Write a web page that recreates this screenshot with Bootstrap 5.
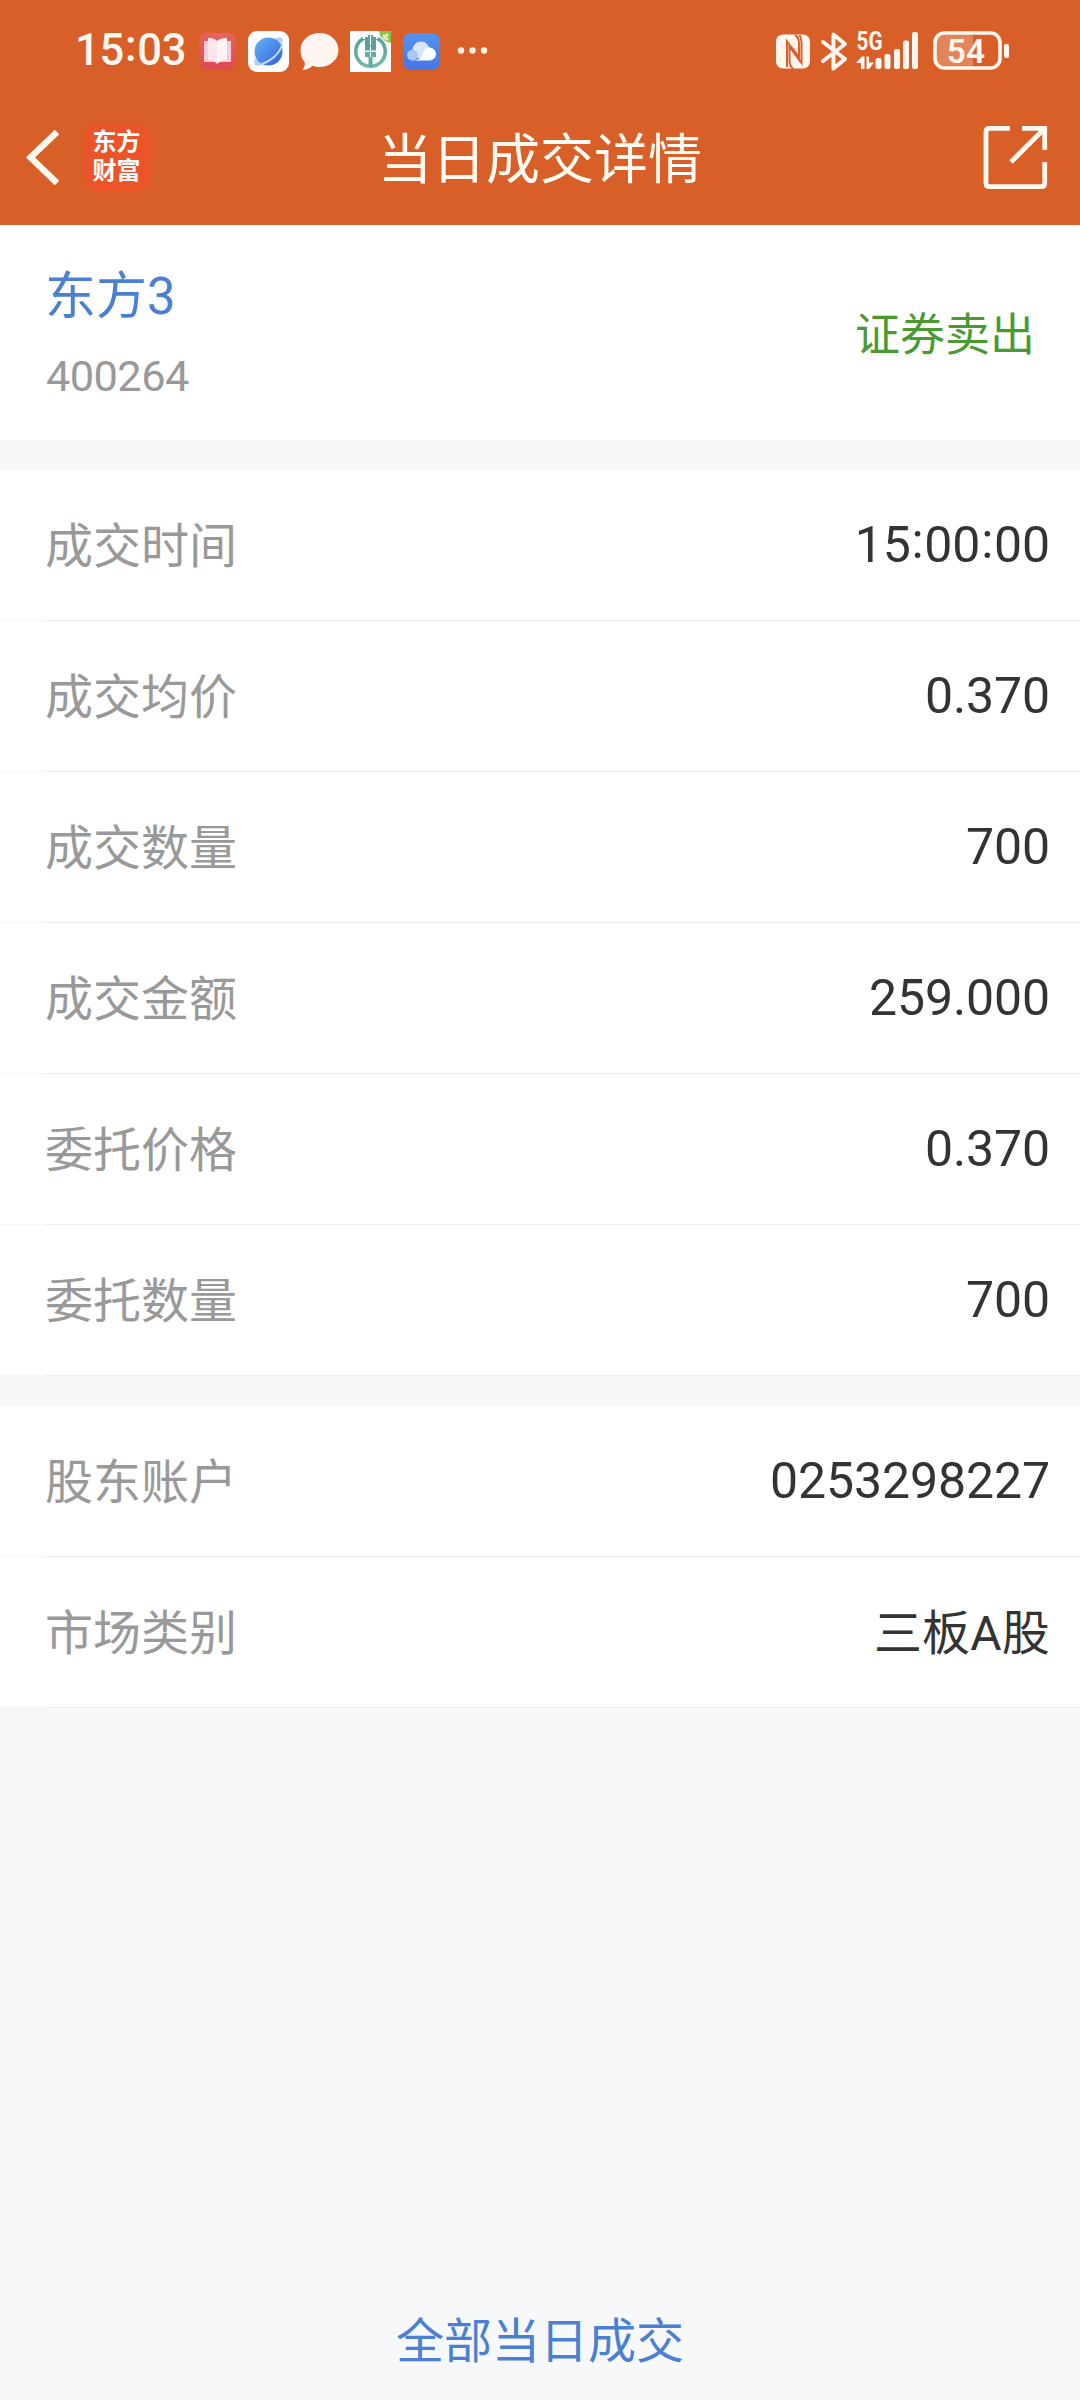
<!DOCTYPE html>
<html lang="zh-CN">
<head>
<meta charset="utf-8">
<meta name="viewport" content="width=device-width, initial-scale=1">
<title>当日成交详情</title>
<link rel="stylesheet" href="https://cdn.jsdelivr.net/npm/bootstrap@5.3.0/dist/css/bootstrap.min.css">
<style>
  body { font-family: Roboto, "Noto Sans CJK SC", sans-serif; background: #f7f8fa; color: #333; line-height: 1; }
  .screen { height: 2400px; width: 1080px; }
  .topbar { background: #d85f28; color: #fff6f0; height: 225px; }
  .status { height: 102px; padding-left: 75px; padding-right: 70px; }
  .clock { font-size: 43.5px; font-weight: 500; width: 110px; margin-right: 13px; letter-spacing: -.1px; }
  .colon { position: relative; top: -4px; padding: 0 .8px; }
  .titlebar { height: 113px; }
  .page-title { font-size: 54px; color: #fffaf2; line-height: 113px; padding-top: 4px; }
  .brand-tile { width: 67px; height: 67px; border-radius: 14px; background: #ea5428; color: #fff; font-size: 24px; line-height: 29px; font-weight: 700; margin: 0 0 3px 25px; padding-right: 2px; }
  .summary { height: 215px; padding: 0 45px 0 45px; }
  .stock { font-size: 51px; line-height: 60px; color: #4b7fd1; margin-top: 42px; }
  .code { font-size: 43.4px; line-height: 50px; color: #999; margin-top: 25px; padding-left: 1px; letter-spacing: -.6px; }
  .side { font-size: 45px; color: #4a9a32; padding-top: 5px; }
  .gap-bar { height: 30px; }
  .item { height: 151px; padding: 0 30px 1px 45px; background: linear-gradient(90deg, #f7f8fa 45px, #e9ebed 45px) bottom / 100% 1px no-repeat #fff; }
  .item-label { font-size: 48px; color: #999; padding-top: 3px; }
  .item-value { font-size: 50px; color: #333; letter-spacing: -.1px; }
  .item-value-cjk { font-size: 48px; letter-spacing: .2px; padding-top: 3px; }
  .all-link { font-size: 48px; color: #4b7fd1; line-height: 60px; padding-bottom: 28px; }
  svg { display: block; flex: none; }
</style>
</head>
<body>
<div class="screen d-flex flex-column">
  <header class="topbar">
    <div class="status d-flex align-items-center">
      <span class="clock text-nowrap">15<span class="colon">:</span>03</span>
      <!-- notification icons -->
      <svg width="292" height="46" viewBox="198 28 292 46">
        <defs>
          <linearGradient id="book" x2="0" y2="1"><stop stop-color="#e56461"/><stop offset="1" stop-color="#dc4a50"/></linearGradient>
          <linearGradient id="globe" x2="1" y2="1"><stop stop-color="#63b7f4"/><stop offset="1" stop-color="#335ee0"/></linearGradient>
          <linearGradient id="sky" x2="0" y2="1"><stop stop-color="#5394f0"/><stop offset="1" stop-color="#4775e8"/></linearGradient>
          <linearGradient id="teal" x2="0" y2="1"><stop stop-color="#559d9f"/><stop offset="1" stop-color="#75b9a6"/></linearGradient>
        </defs>
        <rect x="199" y="33" width="37" height="37" rx="8" fill="url(#book)"/>
        <path d="M204 41h4v-3q6 0 9 3q4-3 10-3v3h4v21h-11l-3 2-2-2h-11z" fill="#f5cbd4"/>
        <path d="M208 38q6 0 9 3v22q-4-3-9-3z" fill="#fbe5ec"/><path d="M217 41q4-3 10-3v22q-6 0-10 3z" fill="#fff3f6"/>
        <rect x="248" y="31" width="41" height="41" rx="9" fill="#fff"/>
        <ellipse cx="268.500" cy="51.500" rx="19" ry="6.500" transform="rotate(-45 268.500 51.500)" fill="#b5cff8"/>
        <circle cx="268.500" cy="51.500" r="14" fill="url(#globe)"/>
        <path d="M282.500 44q-2 7-8 12.500t-13 7.500" fill="none" stroke="#c6dbfb" stroke-width="2"/>
        <path d="M319.500 33c10.500 0 19 7.500 19 17s-8.500 17-19 17c-3 0-5-.4-7-1.200-2.500 2.500-6 4-10 4 2-2 2.600-5 2.200-7.500-2.800-3-4.200-8-4.200-12.300 0-9.500 8.500-17 19-17z" fill="#fff6f2"/>
        <rect x="350" y="31" width="41" height="41" fill="#fff"/>
        <circle cx="370.500" cy="51.500" r="14.800" fill="none" stroke="url(#teal)" stroke-width="3.600"/>
        <path d="M363 32h15v7h-15z" fill="#fff"/>
        <path d="M365 37h3v-2h5v2h3v13.500h-11z" fill="#5c9fa3"/>
        <path d="M370.500 35v10" stroke="#fff" stroke-width="1.200"/>
        <path d="M365 52h11v5h-3.500v10h-4V57H365z" fill="#62aba4"/>
        <path d="M370.500 46v11" stroke="#fff" stroke-width="1"/>
        <path d="M379 31h12v12q-11-2-12-12z" fill="#8dc24a"/><path d="M383 39l5-5M383 35l5 5" stroke="#dff0be" stroke-width="2.500"/>
        <rect x="403" y="33" width="37" height="37" rx="8" fill="url(#sky)"/>
        <circle cx="421" cy="50" r="8.500" fill="#d6e6fd"/><circle cx="412.500" cy="55" r="5.500" fill="#a9c8fa"/>
        <path d="M412 60.500q8 0 11-6a6.500 6.500 0 1 1 6 6z" fill="#fff"/>
        <g fill="#fff0e6"><circle cx="461" cy="50.500" r="3.200"/><circle cx="472.500" cy="50.500" r="3.200"/><circle cx="484" cy="50.500" r="3.200"/></g>
      </svg>
      <!-- system icons -->
      <svg class="ms-auto" width="236" height="46" viewBox="774 28 236 46" fill="#fff6ef">
        <rect x="776" y="34.500" width="34" height="34" rx="7"/>
        <path d="M787 67V41.500L799 57V44Q799 37 795 35M799.500 35Q801.500 38 801.500 43V63L789.500 47V60Q789.500 66 793 68.500" fill="none" stroke="#d85f28" stroke-width="2"/>
        <path d="M823 42l22 17-11.500 9.500V34.500L845 44l-22 17" fill="none" stroke="#fff6ef" stroke-width="4" stroke-linejoin="round" stroke-linecap="round"/>
        <text x="856.500" y="50" font-size="25" font-weight="700" textLength="26" lengthAdjust="spacingAndGlyphs">5G</text>
        <path d="M856 63l6-6.500h2.500V69h-3.500v-6zM866.500 56.500h2.500v6h5l-5 6.500h-2.500z"/>
        <rect x="875.500" y="58" width="6" height="11" rx="2"/><rect x="884.500" y="54" width="6" height="15" rx="2"/><rect x="894" y="49" width="6" height="20" rx="2"/><rect x="903" y="40.500" width="6" height="28.500" rx="2"/><rect x="912" y="32" width="6" height="37" rx="2"/>
        <path d="M944 33h29v35h-29a9 9 0 0 1-9-9V42a9 9 0 0 1 9-9z" opacity=".25"/>
        <rect x="935" y="33" width="65" height="35" rx="9.500" fill="none" stroke="#fff6ef" stroke-width="3.600"/>
        <rect x="1004" y="44" width="5" height="14" rx="2"/>
        <text x="966" y="62.500" font-size="33.500" font-weight="600" text-anchor="middle">54</text>
      </svg>
    </div>
    <div class="titlebar d-flex align-items-center position-relative">
      <svg class="mb-1" width="59" height="60" viewBox="0 127 59 60" fill="none" stroke="#fff9ef" stroke-width="6.400"><path d="M57 132L30.500 157.500 57 183"/></svg>
      <div class="brand-tile d-flex flex-column align-items-center justify-content-center"><span>东方</span><span>财富</span></div>
      <h1 class="page-title position-absolute start-0 end-0 text-center m-0 fw-normal">当日成交详情</h1>
      <svg class="ms-auto me-4 mb-1" width="80" height="70" viewBox="976 122 80 70" fill="none" stroke="#fffaf0" stroke-width="4.800">
        <path d="M1010 128.300h-20.500q-3.500 0-3.500 3.500v51.400q0 3.500 3.500 3.500h51.700q3.500 0 3.500-3.500V162M1022 128.300h22.700V150M1043.500 129.500L1011 162"/>
      </svg>
    </div>
  </header>

  <section class="summary bg-white d-flex justify-content-between">
    <div>
      <div class="stock">东方3</div>
      <div class="code">400264</div>
    </div>
    <div class="side align-self-center">证券卖出</div>
  </section>
  <div class="gap-bar"></div>

  <section>
    <div class="item d-flex align-items-center justify-content-between"><span class="item-label">成交时间</span><span class="item-value">15<span class="colon">:</span>00<span class="colon">:</span>00</span></div>
    <div class="item d-flex align-items-center justify-content-between"><span class="item-label">成交均价</span><span class="item-value">0.370</span></div>
    <div class="item d-flex align-items-center justify-content-between"><span class="item-label">成交数量</span><span class="item-value">700</span></div>
    <div class="item d-flex align-items-center justify-content-between"><span class="item-label">成交金额</span><span class="item-value">259.000</span></div>
    <div class="item d-flex align-items-center justify-content-between"><span class="item-label">委托价格</span><span class="item-value">0.370</span></div>
    <div class="item d-flex align-items-center justify-content-between"><span class="item-label">委托数量</span><span class="item-value">700</span></div>
  </section>
  <div class="gap-bar"></div>

  <section>
    <div class="item d-flex align-items-center justify-content-between"><span class="item-label">股东账户</span><span class="item-value">0253298227</span></div>
    <div class="item d-flex align-items-center justify-content-between"><span class="item-label">市场类别</span><span class="item-value item-value-cjk">三板A股</span></div>
  </section>

  <a href="#" class="all-link mt-auto text-center text-decoration-none">全部当日成交</a>
</div>
<script src="https://cdn.jsdelivr.net/npm/bootstrap@5.3.0/dist/js/bootstrap.bundle.min.js"></script>
</body>
</html>
